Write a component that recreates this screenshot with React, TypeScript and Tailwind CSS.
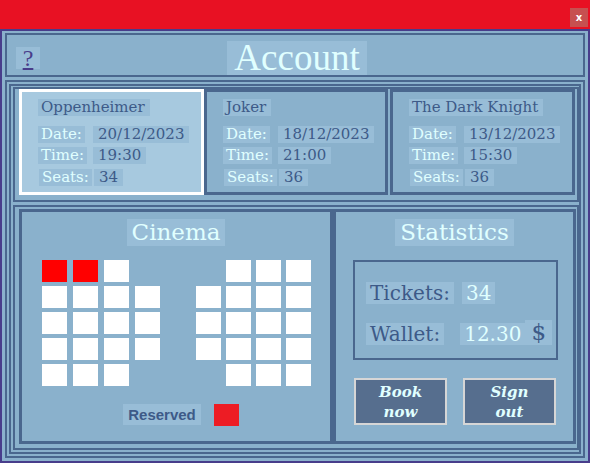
import React from 'react';

const serif = "font-['DejaVu_Serif',serif]";

interface Ticket {
  id: string;
  film: string;
  date: string;
  time: string;
  seats: string;
  selected?: boolean;
}

const tickets: Ticket[] = [
  { id: 'opp', film: 'Oppenheimer', date: '20/12/2023', time: '19:30', seats: '34', selected: true },
  { id: 'jok', film: 'Joker', date: '18/12/2023', time: '21:00', seats: '36' },
  { id: 'tdk', film: 'The Dark Knight', date: '13/12/2023', time: '15:30', seats: '36' },
];

// 1 = free, 2 = reserved, 0 = aisle/no seat
const leftBlock = [
  [2, 2, 1, 0],
  [1, 1, 1, 1],
  [1, 1, 1, 1],
  [1, 1, 1, 1],
  [1, 1, 1, 0],
];
const rightBlock = [
  [0, 1, 1, 1],
  [1, 1, 1, 1],
  [1, 1, 1, 1],
  [1, 1, 1, 1],
  [0, 1, 1, 1],
];

function TicketCard({ t, w }: { t: Ticket; w: string }) {
  return (
    <div
      className={`${w} h-[106px] border-[3px] ${
        t.selected ? 'border-white bg-[#a7c9df]' : 'border-[#4a678e] bg-[#8ab1cc]'
      } pl-[16px] pt-[7px] ${serif} text-[15px] leading-[17px]`}
    >
      <div className="flex">
        <span className="bg-[#98bdd7] text-[#3d5a88] pl-[3px] pr-[5px]">{t.film}</span>
      </div>
      <div className="grid grid-cols-[55px_auto] justify-start mt-[10px] gap-y-[4px]">
        <div className="flex"><span className="bg-[#98bdd7] text-[#e0ffff] px-[3px]">Date:</span></div>
        <div className="flex"><span className="bg-[#98bdd7] text-[#3d5a88] px-[5px]">{t.date}</span></div>
        <div className="flex"><span className="bg-[#98bdd7] text-[#e0ffff] px-[3px]">Time:</span></div>
        <div className="flex"><span className="bg-[#98bdd7] text-[#3d5a88] px-[5px]">{t.time}</span></div>
        <div className="flex mt-[1px]"><span className="bg-[#98bdd7] text-[#e0ffff] px-[3px] ml-[1px]">Seats:</span></div>
        <div className="flex mt-[1px]"><span className="bg-[#98bdd7] text-[#3d5a88] px-[5px] ml-[1px]">{t.seats}</span></div>
      </div>
    </div>
  );
}

function SeatBlock({ rows, gap }: { rows: number[][]; gap: string }) {
  return (
    <div className={`grid grid-cols-[25px_25px_25px_25px] ${gap} gap-y-[4px]`}>
      {rows.flat().map((s, i) => (
        <div
          key={i}
          className={`h-[22px] ${s === 2 ? 'bg-[#ff0000]' : s === 1 ? 'bg-white' : 'bg-transparent'}`}
        />
      ))}
    </div>
  );
}

export default function App() {
  return (
    <div className="w-[590px] h-[463px] flex flex-col bg-[#8ab1cc] overflow-hidden">
      {/* window title bar */}
      <div className="h-[29px] shrink-0 bg-[#e81123] flex justify-end pt-[8px] pr-[2px]">
        <div className="w-[18px] h-[19px] bg-[#c75050] flex items-center justify-center text-white text-[10px] font-bold font-['DejaVu_Sans',sans-serif] leading-none">
          x
        </div>
      </div>

      <div className="flex-1 border-2 border-[#483d8b] pt-[2px] px-[3px] pb-[3px] flex flex-col gap-[3px]">
        {/* header */}
        <div className="h-[44px] shrink-0 border-2 border-[#4a678e] grid grid-cols-[1fr_auto_1fr]">
          <div className="pl-[9px] pt-[12px]">
            <span className="inline-block w-[24px] h-[22px] bg-[#98bdd7] text-[#483d8b] font-['Liberation_Serif',serif] text-[24px] leading-[22px] text-center underline underline-offset-[2px]">
              ?
            </span>
          </div>
          <div className="pt-[6px] pl-[4px]">
            <div className="h-[34px] bg-[#98bdd7] px-[7px] text-[#e0ffff] font-['Liberation_Serif',serif] text-[37px] leading-[34px]">
              Account
            </div>
          </div>
          <div />
        </div>

        {/* body */}
        <div className="flex-1 border-2 border-[#4a678e] p-[2px]">
          <div className="h-full border-2 border-[#4a678e] pt-[1px] pb-[2px] pl-[2px] flex flex-col gap-[3px]">
            <div className="h-[115px] shrink-0 border-2 border-[#4a678e] pl-[4px] flex">
              <TicketCard t={tickets[0]} w="w-[185px]" />
              <TicketCard t={tickets[1]} w="w-[184px]" />
              <div className="w-[2px]" />
              <TicketCard t={tickets[2]} w="w-[185px]" />
            </div>

            <div className="flex-1 border-2 border-[#4a678e] pt-[2px] pl-[4px] flex">
              {/* cinema */}
              <div className="w-[314px] h-[235px] border-[3px] border-[#4a678e] flex flex-col items-center">
                <div className={`mt-[7px] h-[27px] bg-[#98bdd7] px-[5px] text-[#e0ffff] ${serif} text-[23px] leading-[27px]`}>
                  Cinema
                </div>
                <div className="self-start ml-[20px] mt-[14px] flex gap-[36px]">
                  <SeatBlock rows={leftBlock} gap="gap-x-[6px]" />
                  <SeatBlock rows={rightBlock} gap="gap-x-[5px]" />
                </div>
                <div className="mt-[18px] ml-[10px] flex gap-[13px]">
                  <span className="h-[21px] bg-[#98bdd7] px-[5px] text-[#3d5a88] font-['Liberation_Sans',sans-serif] font-bold text-[15px] leading-[21px]">
                    Reserved
                  </span>
                  <span className="w-[25px] h-[22px] bg-[#ed1c24]" />
                </div>
              </div>

              {/* statistics */}
              <div className="w-[243px] h-[235px] border-[3px] border-[#4a678e] flex flex-col items-center">
                <div className={`mt-[7px] h-[27px] bg-[#98bdd7] px-[5px] text-[#e0ffff] ${serif} text-[23px] leading-[27px]`}>
                  Statistics
                </div>
                <div className={`self-start ml-[17px] mt-[14px] w-[205px] h-[100px] border-2 border-[#4a678e] pl-[11px] pt-[20px] ${serif} text-[20px]`}>
                  <div className="flex items-end gap-[8px]">
                    <span className="h-[22px] leading-[22px] bg-[#98bdd7] px-[4px] text-[#3d5a88]">Tickets:</span>
                    <span className="h-[22px] leading-[22px] bg-[#98bdd7] px-[4px] text-[#e0ffff]">34</span>
                  </div>
                  <div className="flex items-end mt-[16px]">
                    <span className="h-[22px] leading-[22px] bg-[#98bdd7] px-[4px] text-[#3d5a88]">Wallet:</span>
                    <span className="ml-[16px] h-[22px] leading-[22px] bg-[#98bdd7] px-[4px] text-[#e0ffff]">12.30</span>
                    <span className="h-[25px] leading-[25px] bg-[#98bdd7] px-[6px] text-[#3d5a88] text-[23px]">$</span>
                  </div>
                </div>
                <div className="self-start ml-[18px] mt-[18px] flex gap-[16px]">
                  {['Book|now', 'Sign|out'].map((b) => (
                    <div
                      key={b}
                      className={`w-[93px] h-[47px] border-2 border-[#d6d6d6] bg-[#566e8e] flex flex-col items-center justify-center text-[#e0ffff] ${serif} italic font-bold text-[15px] leading-[20px]`}
                    >
                      {b.split('|').map((l) => (
                        <span key={l}>{l}</span>
                      ))}
                    </div>
                  ))}
                </div>
              </div>
            </div>
          </div>
        </div>
      </div>
    </div>
  );
}
